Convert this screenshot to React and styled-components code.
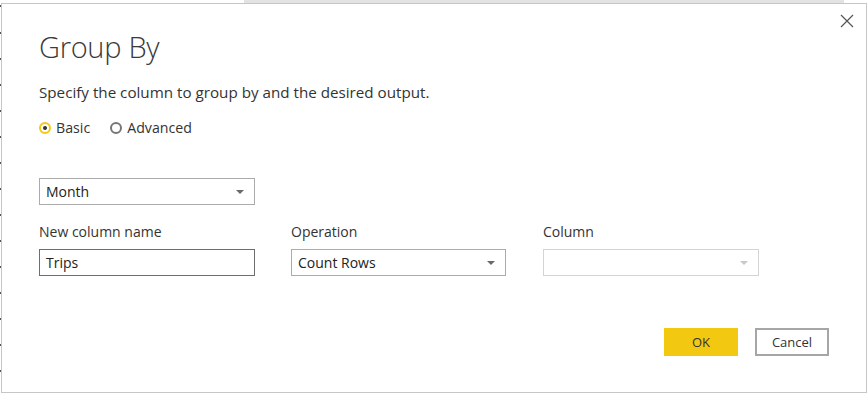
import React from "react";
import styled, { createGlobalStyle } from "styled-components";

const GlobalStyle = createGlobalStyle`
  html, body {
    margin: 0;
    padding: 0;
    background: #ffffff;
  }
  body {
    font-family: "Open Sans", "Liberation Sans", sans-serif;
    color: #333333;
  }
`;

const Page = styled.div`
  width: 868px;
  height: 394px;
  display: flex;
  flex-direction: column;
  overflow: hidden;
`;

const TopStrip = styled.div`
  height: 3px;
  display: flex;
`;

const ScrollTrack = styled.div`
  margin-left: 244px;
  width: 600px;
  background: #e3e3e3;
`;

const Body = styled.div`
  flex: 1;
  display: flex;
`;

const GridEdge = styled.div`
  width: 2px;
  background: repeating-linear-gradient(
    to bottom,
    transparent 0px,
    transparent 24px,
    #555555 24px,
    #555555 26px
  );
  background-position: 0 5px;
`;

const Dialog = styled.div`
  flex: 1;
  margin-right: 1px;
  margin-bottom: 1px;
  border: 1px solid #c6c6c6;
  background: #ffffff;
  padding: 24px 37px 0 37px;
  display: flex;
  flex-direction: column;
  position: relative;
`;

const Close = styled.button`
  position: absolute;
  top: 7px;
  right: 9px;
  width: 20px;
  height: 20px;
  padding: 0;
  border: none;
  background: transparent;
  display: flex;
  align-items: center;
  justify-content: center;
`;

const Title = styled.h1`
  margin: 0;
  font-family: "Open Sans", sans-serif;
  font-weight: 300;
  font-size: 29px;
  line-height: 37px;
  color: #3a3a3a;
  letter-spacing: -0.3px;
`;

const Description = styled.p`
  margin: 17px 0 0 0;
  font-size: 15.2px;
  line-height: 20px;
  color: #333333;
`;

const RadioRow = styled.div`
  margin-top: 16px;
  display: flex;
  align-items: center;
  gap: 20px;
`;

const RadioLabel = styled.label`
  display: flex;
  align-items: center;
  gap: 5px;
  font-size: 14.2px;
  line-height: 20px;
  color: #333333;
`;

const RadioDot = styled.span`
  width: 8px;
  height: 8px;
  border-radius: 50%;
  border: 2px solid ${(p) => (p.$checked ? "#f2c811" : "#777777")};
  display: flex;
  align-items: center;
  justify-content: center;
  &::after {
    content: "";
    width: 4px;
    height: 4px;
    border-radius: 50%;
    background: ${(p) => (p.$checked ? "#333333" : "transparent")};
  }
`;

const Fields = styled.div`
  margin-top: 40px;
  display: grid;
  grid-template-columns: 216px 216px 216px;
  column-gap: 36px;
  row-gap: 0;
`;

const Box = styled.div`
  box-sizing: border-box;
  width: ${(p) => p.$width || "216px"};
  height: 27px;
  border: 1px solid ${(p) => p.$border || "#ababab"};
  display: flex;
  align-items: center;
  justify-content: space-between;
  padding: 0 10px 0 6px;
  font-size: 14px;
  color: #222222;
  background: #ffffff;
`;

const Caret = styled.span`
  width: 0;
  height: 0;
  border-left: 4px solid transparent;
  border-right: 4px solid transparent;
  border-top: 4px solid ${(p) => (p.$disabled ? "#c8c8c8" : "#6a6a6a")};
`;

const Label = styled.div`
  margin-top: 17px;
  margin-bottom: 7px;
  font-size: 14px;
  line-height: 20px;
  color: #333333;
`;

const Footer = styled.div`
  margin-top: 52px;
  display: flex;
  justify-content: flex-end;
  gap: 17px;
  width: 790px;
`;

const Button = styled.button`
  box-sizing: border-box;
  width: 74px;
  height: 28px;
  font-family: "Open Sans", sans-serif;
  font-size: 13px;
  color: #333333;
  background: ${(p) => (p.$primary ? "#f2c811" : "#ffffff")};
  border: ${(p) => (p.$primary ? "1px solid #f2c811" : "2px solid #a6a6a6")};
  padding: 0;
`;

function Select({ value, width, border, disabled }) {
  return (
    <Box $width={width} $border={border}>
      <span>{value}</span>
      <Caret $disabled={disabled} />
    </Box>
  );
}

export default function App() {
  return (
    <Page>
      <GlobalStyle />
      <TopStrip>
        <ScrollTrack />
      </TopStrip>
      <Body>
        <GridEdge />
        <Dialog>
          <Close aria-label="Close">
            <svg width="14" height="14" viewBox="0 0 14 14">
              <path d="M1 1 L13 13 M13 1 L1 13" stroke="#555" strokeWidth="1.2" fill="none" />
            </svg>
          </Close>
          <Title>Group By</Title>
          <Description>Specify the column to group by and the desired output.</Description>
          <RadioRow>
            <RadioLabel>
              <RadioDot $checked />
              Basic
            </RadioLabel>
            <RadioLabel>
              <RadioDot />
              Advanced
            </RadioLabel>
          </RadioRow>
          <Fields>
            <Select value="Month" />
            <div />
            <div />
            <Label>New column name</Label>
            <Label>Operation</Label>
            <Label>Column</Label>
            <Box $border="#6e6e6e">Trips</Box>
            <Select value="Count Rows" width="215px" />
            <Select value="" border="#d4d4d4" disabled />
          </Fields>
          <Footer>
            <Button $primary>OK</Button>
            <Button>Cancel</Button>
          </Footer>
        </Dialog>
      </Body>
    </Page>
  );
}
